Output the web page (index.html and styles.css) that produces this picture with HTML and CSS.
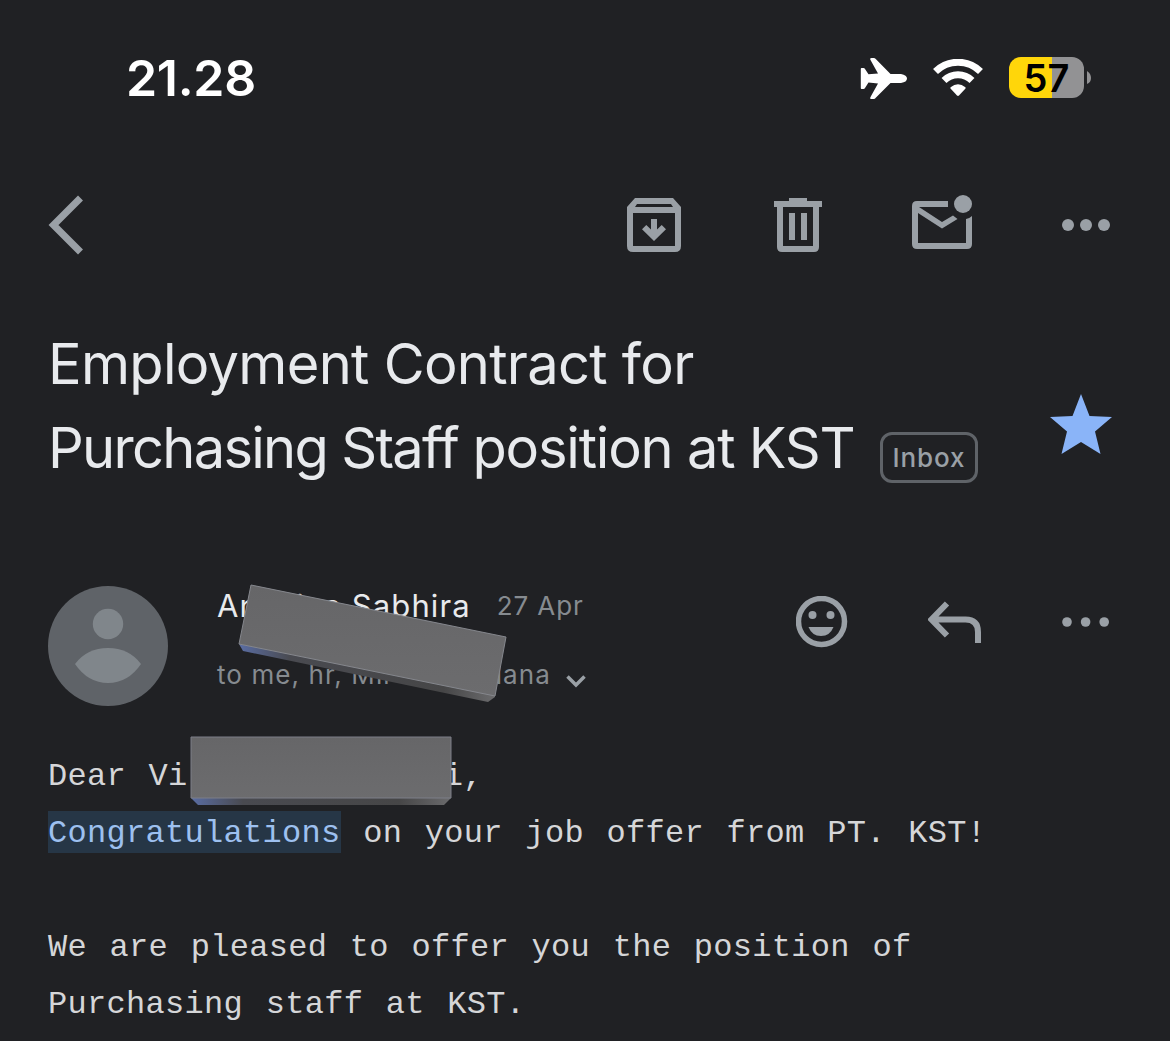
FILE: index.html
```html
<!DOCTYPE html>
<html lang="en">
  <head>
    <meta charset="UTF-8" />
    <meta name="viewport" content="width=device-width, initial-scale=1.0" />
    <title>Employment Contract for Purchasing Staff position at KST</title>
    <link rel="stylesheet" href="styles.css">
  </head>
  <body>
    <div class="screen">
      <div class="status-bar">
        <span class="time">21.28</span>
        <div class="status-icons">
          <svg class="plane" width="48" height="42" viewBox="0 0 48 42">
            <path d="M1.500 11H3.500Q4.500 11 5 12L8.500 17.300L18 16.500L10.500 3Q9.500 1 11.500 1H13.500Q15 1 16 2.200L30.500 17H41Q47 18 47 21.500T41 26H30.500L16 40.500Q15 42 13.500 42H11.500Q9.500 42 10.500 40L18 26.500L8.500 25.500L5 31Q4.500 32 3.500 32H1.500Q.800 32 .800 31V12Q.800 11 1.500 11Z" />
          </svg>
          <svg class="wifi" width="52" height="38" viewBox="0 0 52 38">
            <path class="wave" d="M3.500 12.500A32 32 0 0 1 48.500 12.500" />
            <path class="wave" d="M12 21.500A20 20 0 0 1 40 21.500" />
            <path d="M18.600 28.200Q26 22.500 33.400 28.200Q34 29 33.300 29.800L27 36.500Q26 37.400 25 36.500L18.700 29.800Q18 29 18.600 28.200Z" />
          </svg>
          <div class="battery"><span>57</span></div>
          <svg class="battery-tip" width="5" height="14" viewBox="0 0 5 14">
            <path d="M0 0Q4 2.500 4 7T0 13Z" />
          </svg>
        </div>
      </div>

      <div class="toolbar">
        <svg class="icon back" width="36" height="60" viewBox="0 0 36 60">
          <path class="line" d="M32.500 3L5.500 30L32.500 57" />
        </svg>
        <div class="actions">
          <svg class="icon" width="54" height="54" viewBox="0 0 54 54">
            <path fill-rule="evenodd" d="M8 0H46L54 9V48Q54 54 48 54H6Q0 54 0 48V9ZM10 6L8 9H46L44 6ZM6 15V48H48V15Z" />
            <path d="M24 21H30V31.500L34.700 27L39 31.300L27 43L15 31.300L19.300 27L24 31.500Z" />
          </svg>
          <svg class="icon" width="48" height="54" viewBox="0 0 48 54">
            <path fill-rule="evenodd" d="M15 0H33V3H48V9H45V49Q45 54 40 54H8Q3 54 3 49V9H0V3H15ZM9 9V48H39V9Z" />
            <path d="M15 15H21V42H15ZM27 15H33V42H27Z" />
          </svg>
          <svg class="icon mail" width="60" height="54" viewBox="0 0 60 54">
            <path d="M5 6H36V12H7L30 27L41 20.500L45.500 24L30 33.500L6 18V48H54V24Q57.500 23.500 60 21V49Q60 54 55 54H5Q0 54 0 49V11Q0 6 5 6Z" />
            <circle cx="51" cy="9" r="9" />
          </svg>
          <svg class="icon" width="48" height="12" viewBox="0 0 48 12">
            <circle cx="6" cy="6" r="6" />
            <circle cx="24" cy="6" r="6" />
            <circle cx="42" cy="6" r="6" />
          </svg>
        </div>
      </div>

      <div class="subject">
        <h1>
          <span class="line-one">Employment Contract for</span><br>
          <span class="line-two"><span class="tight">Purchasing Staff</span> position at KST</span>
        </h1>
        <span class="label">Inbox</span>
        <svg class="star" width="64" height="62" viewBox="0 0 64 62">
          <path d="M32 0L40.500 22L63 23L46 37.500L51.500 60L32 48L12.500 60L18 37.500L1 23L23.500 22Z" />
        </svg>
      </div>

      <div class="sender">
        <svg class="avatar" width="120" height="120" viewBox="0 0 120 120">
          <circle class="avatar-bg" cx="60" cy="60" r="60" />
          <circle cx="60" cy="38" r="15.200" />
          <path d="M27 78Q39 62 60 62T93 78Q80 97 60 97T27 78Z" />
        </svg>
        <div class="sender-info">
          <div class="name-row">
            <span class="name">An<span class="gap name-gap"></span>i<span class="gap name-gap-small"></span>a Sabhira</span>
            <span class="date">27 Apr</span>
          </div>
          <div class="to-row">
            <span class="to">to me, hr, Mil<span class="gap to-gap"></span>lana</span>
            <svg class="chevron" width="20" height="13" viewBox="0 0 20 13">
              <path d="M1.500 1.500L10 10L18.500 1.500" />
            </svg>
          </div>
          <svg class="cover cover-tilted" width="270" height="120" viewBox="0 0 270 120">
            <defs>
              <linearGradient id="side" x1="0" x2="1" y1="0" y2="0">
                <stop offset="0" stop-color="#5a6da3" />
                <stop offset=".2" stop-color="#494a50" />
                <stop offset=".8" stop-color="#464647" />
                <stop offset="1" stop-color="#6b6b6d" />
              </linearGradient>
              <linearGradient id="face" x1="0" x2="0" y1="0" y2="1">
                <stop offset="0" stop-color="#666668" />
                <stop offset="1" stop-color="#6c6c6e" />
              </linearGradient>
            </defs>
            <path fill="url(#side)" d="M1 60L5 67L250 118L257 113L256 108Z" />
            <path fill="url(#face)" stroke="#85878d" d="M13 1L268 53L257 112L1 60Z" />
          </svg>
        </div>
        <div class="sender-actions">
          <svg class="icon" width="52" height="52" viewBox="0 0 52 52">
            <circle class="face-ring" cx="25.500" cy="25.500" r="23" />
            <circle cx="16.500" cy="19" r="4" />
            <circle cx="34.500" cy="19" r="4" />
            <path d="M12.500 31H37.500Q34 40 25 40T12.500 31Z" />
          </svg>
          <svg class="icon" width="54" height="42" viewBox="0 0 54 42">
            <path class="line" d="M19 2.500L3.500 18.500L19 34.500M4 18.500H37.500Q50 18.500 50 31V42" />
          </svg>
          <svg class="icon" width="48" height="10" viewBox="0 0 48 10">
            <circle cx="5" cy="5" r="4.800" />
            <circle cx="23.600" cy="5" r="4.800" />
            <circle cx="42.200" cy="5" r="4.800" />
          </svg>
        </div>
      </div>

      <div class="message">
        <p>Dear Vi<span class="gap greeting-gap"></span>i,</p>
        <p><mark>Congratulations</mark> on your job offer from PT. KST!</p>
        <p class="spaced">We are pleased to offer you the position of<br>Purchasing staff at KST.</p>
        <svg class="cover cover-flat" width="262" height="70" viewBox="0 0 262 70">
          <path fill="url(#side)" d="M1 62L8 69H254L261 62Z" />
          <path fill="url(#face)" stroke="#7c7f88" d="M1 1H261V62H1Z" />
        </svg>
      </div>
    </div>
  </body>
</html>
```

FILE: styles.css
```css
* {
  margin: 0;
  padding: 0;
  box-sizing: border-box;
}

body {
  font-family: "Inter", sans-serif;
  background: #202124;
  color: #e8eaed;
  overflow: hidden;
}

.screen {
  width: 1170px;
  height: 1041px;
  overflow: hidden;
}

svg {
  display: block;
  flex-shrink: 0;
}

.status-bar {
  display: flex;
  justify-content: space-between;
  align-items: center;
  height: 155px;
  padding: 0 78px 0 126px;
}

.time {
  font-size: 50px;
  font-weight: 600;
  letter-spacing: -0.3px;
  color: #fff;
}

.status-icons {
  display: flex;
  align-items: center;
  fill: #fff;
}

.wifi {
  margin: 0 25px 0 24px;
}

.wave {
  fill: none;
  stroke: #fff;
  stroke-width: 7;
}

.battery {
  width: 75px;
  height: 41px;
  border-radius: 12px;
  background: linear-gradient(90deg, #ffd60a 57%, #929294 57%);
  color: #000;
  font-size: 38px;
  font-weight: 600;
  line-height: 42px;
  text-align: center;
}

.battery-tip {
  margin-left: 3px;
  fill: #929294;
}

.toolbar {
  display: flex;
  justify-content: space-between;
  align-items: center;
  height: 140px;
  padding: 0 60px 0 48px;
}

.icon {
  fill: #9aa0a6;
}

.line {
  fill: none;
  stroke: #9aa0a6;
  stroke-width: 6;
}

.back .line {
  stroke-width: 7;
}

.actions {
  display: flex;
  align-items: center;
  gap: 90px;
}

.actions .icon:nth-child(2) {
  margin-left: 3px;
}

.mail {
  margin-bottom: 6px;
}

.subject {
  display: flex;
  height: 291px;
  padding: 27px 57px 0 48px;
}

h1 {
  width: 832px;
  font-size: 56px;
  font-weight: 400;
  line-height: 84px;
  white-space: nowrap;
}

.line-one {
  letter-spacing: -0.7px;
}

.line-two {
  letter-spacing: -1.2px;
}

.tight {
  letter-spacing: -1.7px;
}

.label {
  width: 98px;
  height: 51px;
  margin-top: 110px;
  border: 3px solid #5f6368;
  border-radius: 12px;
  color: #9aa0a6;
  font-size: 26px;
  font-weight: 500;
  line-height: 45px;
  letter-spacing: 0.9px;
  text-align: center;
}

.star {
  margin: 72px 0 0 auto;
  fill: #8ab4f8;
}

.sender {
  display: flex;
  height: 160px;
  padding: 0 60px 0 48px;
}

.avatar {
  fill: #80868b;
}

.avatar-bg {
  fill: #5f6368;
}

.sender-info {
  position: relative;
  width: 579px;
  margin-left: 49px;
}

.gap {
  display: inline-block;
}

.name-row {
  display: flex;
  height: 40px;
  line-height: 40px;
  white-space: nowrap;
}

.name {
  font-size: 31px;
  letter-spacing: 1.1px;
}

.name-gap {
  width: 37px;
}

.name-gap-small {
  width: 19px;
}

.date {
  margin-left: 26px;
  color: #868b90;
  font-size: 26px;
  letter-spacing: 0.9px;
}

.to-row {
  display: flex;
  align-items: center;
  height: 40px;
  margin-top: 28px;
  color: #868b90;
  font-size: 26px;
  letter-spacing: 1.1px;
}

.to-gap {
  width: 105px;
}

.chevron {
  margin: 15px 0 0 15px;
  fill: none;
  stroke: #9aa0a6;
  stroke-width: 3.5;
}

.cover {
  position: absolute;
}

.cover-tilted {
  top: -2px;
  left: 21px;
}

.sender-actions {
  display: flex;
  align-items: center;
  height: 72px;
  gap: 80px;
}

.face-ring {
  fill: none;
  stroke: #9aa0a6;
  stroke-width: 5.5;
}

.message {
  position: relative;
  padding: 2px 0 0 48px;
  color: #d5d6d8;
  font-family: "Courier New", "Liberation Mono", monospace;
  font-size: 32px;
  line-height: 57px;
  letter-spacing: 0.3px;
  word-spacing: 3.1px;
}

.spaced {
  margin-top: 57px;
}

mark {
  padding: 4px 0 1px;
  background: #263646;
  color: #9dc0ef;
}

.greeting-gap {
  width: 256px;
}

.cover-flat {
  top: -10px;
  left: 190px;
}
```
